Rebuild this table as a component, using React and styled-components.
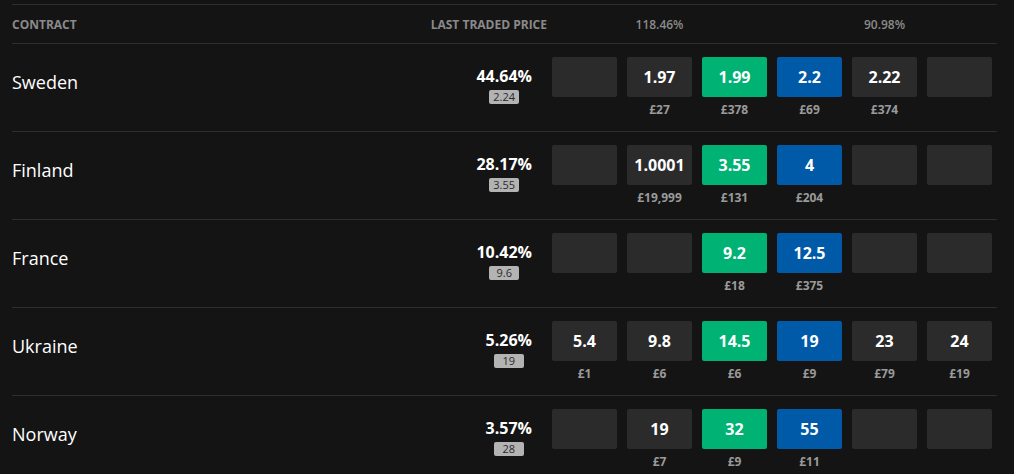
import React from 'react';
import styled, { createGlobalStyle } from 'styled-components';

const GlobalStyle = createGlobalStyle`
    body {
        margin: 0;
        background: #141414;
        font-family: "Open Sans", "Liberation Sans", sans-serif;
        color: #fff;
    }
`;

const contracts = [
    { name: 'Sweden', pct: '44.64%', ltp: '2.24', prices: [null, ['1.97', '£27'], ['1.99', '£378'], ['2.2', '£69'], ['2.22', '£374'], null] },
    { name: 'Finland', pct: '28.17%', ltp: '3.55', prices: [null, ['1.0001', '£19,999'], ['3.55', '£131'], ['4', '£204'], null, null] },
    { name: 'France', pct: '10.42%', ltp: '9.6', prices: [null, null, ['9.2', '£18'], ['12.5', '£375'], null, null] },
    { name: 'Ukraine', pct: '5.26%', ltp: '19', prices: [['5.4', '£1'], ['9.8', '£6'], ['14.5', '£6'], ['19', '£9'], ['23', '£79'], ['24', '£19']] },
    { name: 'Norway', pct: '3.57%', ltp: '28', prices: [null, ['19', '£7'], ['32', '£9'], ['55', '£11'], null, null] },
];

const kinds = ['plain', 'plain', 'back', 'lay', 'plain', 'plain'];

function App() {
    return (
        <>
            <GlobalStyle />
            <Market>
                <HeaderRow>
                    <HeadLabel>Contract</HeadLabel>
                    <HeadLabel $right>Last Traded Price</HeadLabel>
                    <span />
                    <BookPct>118.46%</BookPct>
                    <span />
                    <span />
                    <BookPct>90.98%</BookPct>
                    <span />
                </HeaderRow>
                {contracts.map((c) => (
                    <Row key={c.name}>
                        <Name>{c.name}</Name>
                        <LastTraded>
                            <Pct>{c.pct}</Pct>
                            <Badge>{c.ltp}</Badge>
                        </LastTraded>
                        {c.prices.map((p, i) => (
                            <Cell key={i}>
                                <PriceBox $kind={kinds[i]}>{p ? p[0] : ''}</PriceBox>
                                <Amount>{p ? p[1] : ''}</Amount>
                            </Cell>
                        ))}
                    </Row>
                ))}
            </Market>
        </>
    );
}

const boxColors = {
    plain: '#2b2b2b',
    back: '#00b273',
    lay: '#005aa7',
};

const Market = styled.div`
    padding: 4px 17px 0 12px;
    height: 470px;
    overflow: hidden;
`;

const Grid = styled.div`
    display: grid;
    grid-template-columns: 1fr auto repeat(6, 65px);
    column-gap: 10px;
    padding-right: 5px;
    border-top: 1px solid #2e2e2e;
    box-sizing: border-box;
`;

const HeaderRow = styled(Grid)`
    height: 39px;
    align-items: center;
`;

const HeadLabel = styled.div`
    font-size: 12px;
    font-weight: 700;
    text-transform: uppercase;
    color: #8a8a8a;
    text-align: ${(p) => (p.$right ? 'right' : 'left')};
    margin-right: ${(p) => (p.$right ? '-5px' : '0')};
`;

const BookPct = styled.div`
    font-size: 12px;
    font-weight: 600;
    color: #8a8a8a;
    text-align: center;
`;

const Row = styled(Grid)`
    height: 88px;
    align-items: start;
    padding-top: 13px;
`;

const Name = styled.div`
    font-size: 18px;
    line-height: 24px;
    padding-top: 13px;
    color: #fff;
`;

const LastTraded = styled.div`
    display: flex;
    flex-direction: column;
    align-items: center;
    margin-right: 10px;
    padding-top: 8px;
`;

const Pct = styled.div`
    font-size: 16px;
    font-weight: 700;
    line-height: 22px;
`;

const Badge = styled.span`
    margin-top: 3px;
    background: #b3b3b3;
    color: #2a2a2a;
    font-size: 11px;
    line-height: 14px;
    padding: 0 4px;
    border-radius: 2px;
    min-width: 22px;
    text-align: center;
`;

const Cell = styled.div`
    display: flex;
    flex-direction: column;
    align-items: center;
`;

const PriceBox = styled.div`
    width: 65px;
    height: 40px;
    border-radius: 2px;
    background: ${(p) => boxColors[p.$kind]};
    display: flex;
    align-items: center;
    justify-content: center;
    font-size: 16px;
    font-weight: 700;
    color: #fff;
`;

const Amount = styled.div`
    margin-top: 4px;
    font-size: 12px;
    font-weight: 700;
    line-height: 18px;
    color: #9a9a9a;
`;

export default App;
